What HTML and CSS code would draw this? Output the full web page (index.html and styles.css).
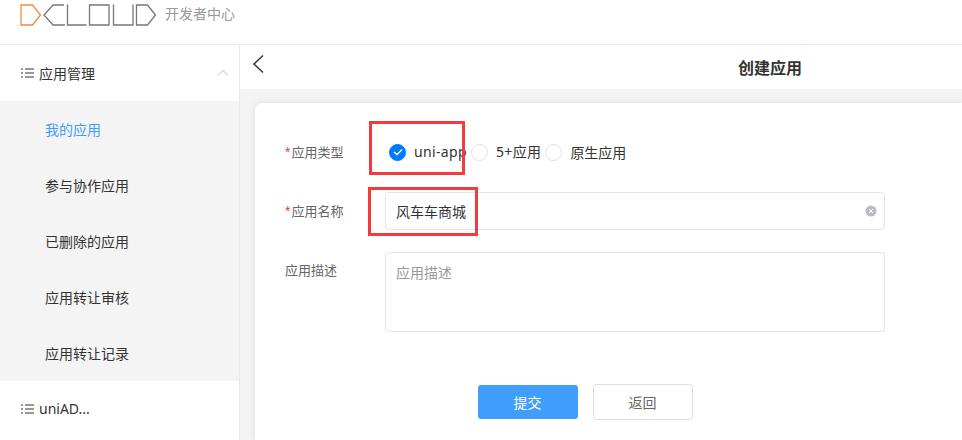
FILE: index.html
```html
<!DOCTYPE html>
<html lang="zh-CN">
<head>
<meta charset="utf-8">
<title>创建应用</title>
<link rel="stylesheet" href="styles.css">
</head>
<body>
<header class="topbar">
  <svg class="logo" width="137" height="28" viewBox="0 0 137 28" fill="none" stroke-width="1.300">
    <path d="M1 5H12.500L20.500 15L12.500 25H1Z" stroke="#f58a3c"/>
    <path d="M44 5H33L24 15L33 25H45" stroke="#777"/>
    <path d="M47.500 4.500V25H66.500" stroke="#777"/>
    <path d="M69.500 5H89V25H69.500Z" stroke="#777"/>
    <path d="M93.500 4.500V25H113V4.500" stroke="#777"/>
    <path d="M116.500 5H127.500L135.500 15L127.500 25H116.500Z" stroke="#777"/>
  </svg>
  <span class="brand-sub">开发者中心</span>
</header>
<div class="layout">
  <aside class="sidebar">
    <div class="group">
      <svg class="list-icon" width="13" height="10" viewBox="0 0 13 10"><path d="M0 1h2M0 5h2M0 9h2M4 1h9M4 5h9M4 9h9" stroke="#333" stroke-width="1"/></svg>
      <span class="group-title">应用管理</span>
      <svg class="chevron" width="12" height="7" viewBox="0 0 12 7" fill="none"><path d="M1 6.500L6 1.500L11 6.500" stroke="#bbb" stroke-width="1"/></svg>
    </div>
    <ul class="submenu">
      <li class="active">我的应用</li>
      <li>参与协作应用</li>
      <li>已删除的应用</li>
      <li>应用转让审核</li>
      <li>应用转让记录</li>
    </ul>
    <div class="group">
      <svg class="list-icon" width="13" height="10" viewBox="0 0 13 10"><path d="M0 1h2M0 5h2M0 9h2M4 1h9M4 5h9M4 9h9" stroke="#333" stroke-width="1"/></svg>
      <span class="group-title latin">uniAD...</span>
    </div>
  </aside>
  <main class="main">
    <div class="subbar">
      <svg class="back" width="12" height="20" viewBox="0 0 12 20" fill="none"><path d="M11 1.500L2 10L11 18.500" stroke="#333" stroke-width="1.500"/></svg>
      <h1 class="page-title">创建应用</h1>
    </div>
    <div class="canvas">
      <section class="card">
        <form class="form">
          <div class="row row-type">
            <label class="label"><em>*</em>应用类型</label>
            <div class="radios">
              <span class="radio radio-on"><svg width="10" height="8" viewBox="0 0 10 8" fill="none"><path d="M1 4L4 6.500L9 1.500" stroke="#fff" stroke-width="1.500"/></svg></span>
              <span class="radio-text latin">uni-app</span>
              <span class="radio"></span>
              <span class="radio-text latin">5+应用</span>
              <span class="radio"></span>
              <span class="radio-text">原生应用</span>
            </div>
          </div>
          <div class="row row-name">
            <label class="label"><em>*</em>应用名称</label>
            <div class="input">
              <span>风车车商城</span>
              <svg class="clear" width="12" height="12" viewBox="0 0 12 12" fill="none"><circle cx="6" cy="6" r="5.500" fill="#b9bdc8"/><path d="M4 4L8 8M8 4L4 8" stroke="#fff" stroke-width="1"/></svg>
            </div>
          </div>
          <div class="row row-desc">
            <label class="label">应用描述</label>
            <div class="textarea">应用描述</div>
          </div>
          <div class="actions">
            <button type="button" class="btn btn-primary">提交</button>
            <button type="button" class="btn btn-plain">返回</button>
          </div>
        </form>
      </section>
    </div>
  </main>
</div>
<div class="mark mark-type"></div>
<div class="mark mark-name"></div>
</body>
</html>
```
FILE: styles.css
```css
* { box-sizing: border-box; }
html, body { margin: 0; height: 100%; overflow: hidden; }
body {
  position: relative;
  background: #fff;
  color: #333;
  font-family: "Noto Sans CJK SC", "Liberation Sans", sans-serif;
  font-size: 14px;
}
.latin { font-family: "Noto Sans", "Noto Sans CJK SC", sans-serif; }
.topbar {
  height: 45px;
  display: flex;
  align-items: flex-start;
  padding: 0 0 0 20px;
  border-bottom: 1px solid #e8e8e8;
}
.logo { display: block; }
.brand-sub {
  margin: 3px 0 0 8px;
  font-size: 14px;
  line-height: 20px;
  color: #999;
}
.layout { display: flex; height: 395px; }
.sidebar {
  width: 240px;
  flex: none;
  border-right: 1px solid #e8e8e8;
}
.group {
  height: 56px;
  display: flex;
  align-items: center;
  padding: 0 10px 0 21px;
}
.list-icon { flex: none; margin-right: 5px; }
.group-title { flex: 1; line-height: 20px; }
.chevron { flex: none; margin-top: -2px; }
.submenu { list-style: none; margin: 0; padding: 0; background: #f4f4f4; }
.submenu li {
  height: 56px;
  line-height: 56px;
  padding-left: 45px;
  font-size: 14px;
}
.submenu .active { color: #409eff; }
.main { flex: 1; min-width: 0; display: flex; flex-direction: column; }
.subbar {
  height: 44px;
  flex: none;
  display: flex;
  justify-content: center;
  padding-left: 338px;
  position: relative;
}
.back { position: absolute; left: 12px; top: 9px; }
.page-title { margin: 12px 0 0; font-size: 16px; line-height: 20px; font-weight: 700; }
.canvas {
  flex: 1;
  background: #f4f4f4;
  padding: 14px 0 0 15px;
  min-height: 0;
}
.card {
  height: 100%;
  background: #fff;
  border-radius: 8px 0 0 0;
  box-shadow: 0 0 6px rgba(0, 0, 0, .1);
}
.form { padding: 0 0 0 30px; }
.row { display: flex; width: 600px; }
.label {
  width: 100px;
  flex: none;
  font-size: 13px;
  line-height: 18px;
  color: #666;
}
.label em {
  font-style: normal;
  font-family: "Liberation Sans", sans-serif;
  font-size: 14px;
  margin-right: 1px;
  color: #e43d33;
}
.row-type { padding-top: 40px; height: 89px; align-items: flex-start; }
.radios { display: flex; align-items: center; height: 18px; padding-left: 4px; }
.radio {
  width: 17px;
  height: 17px;
  border-radius: 50%;
  border: 1px solid #e0e0e0;
  background: #fff;
  display: flex;
  align-items: center;
  justify-content: center;
  flex: none;
}
.radio-on { background: #007aff; border-color: #007aff; }
.radio-text { margin-left: 8px; margin-right: 4px; font-size: 14px; line-height: 18px; white-space: nowrap; }
.radio-text.latin { letter-spacing: .35px; }
.row-name { height: 60px; }
.row-name .label { padding-top: 10px; }
.input {
  width: 500px;
  height: 38px;
  border: 1px solid #e5e5e5;
  border-radius: 4px;
  display: flex;
  align-items: center;
  justify-content: space-between;
  padding: 0 7px 0 10px;
  font-size: 14px;
}
.row-desc { height: 80px; }
.row-desc .label { padding-top: 9px; }
.textarea {
  width: 500px;
  height: 80px;
  border: 1px solid #e5e5e5;
  border-radius: 4px;
  padding: 9px 10px;
  font-size: 14px;
  line-height: 20px;
  color: #999;
}
.actions { display: flex; gap: 15px; width: 600px; justify-content: center; margin-top: 53px; }
.btn {
  width: 100px;
  height: 34px;
  border-radius: 3px;
  font: inherit;
  font-size: 14px;
  padding: 0;
}
.btn-primary { background: #409eff; border: none; color: #fff; }
.btn-plain { height: 36px; margin-top: -1px; background: #fff; border: 1px solid #dcdfe6; color: #666; }
.mark { position: absolute; border: 3px solid #f43a3a; }
.mark-type { left: 369px; top: 121px; width: 96px; height: 54px; }
.mark-name { left: 368px; top: 187px; width: 110px; height: 49px; }
```
